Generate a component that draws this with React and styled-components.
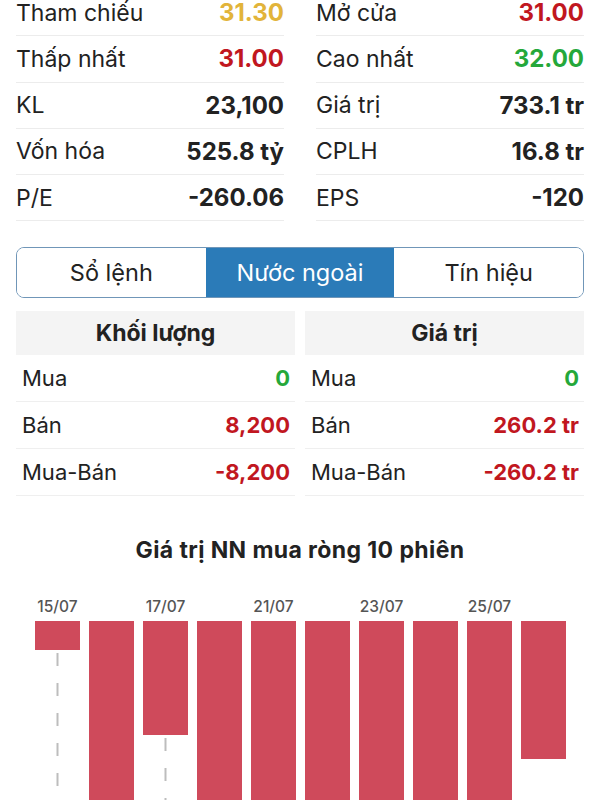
import React from 'react';
import styled, { createGlobalStyle } from 'styled-components';

const GlobalStyle = createGlobalStyle`
  html, body {
    margin: 0;
    padding: 0;
    background: #fff;
    overflow: hidden;
  }
  body {
    font-family: Inter, "Noto Sans", "Liberation Sans", sans-serif;
    color: #222;
  }
`;

const COLORS = {
  normal: '#222',
  ref: '#e2b43a',
  down: '#c1171f',
  up: '#25a83a',
};

const stats = [
  [
    { label: 'Tham chiếu', value: '31.30', tone: 'ref' },
    { label: 'Thấp nhất', value: '31.00', tone: 'down' },
    { label: 'KL', value: '23,100' },
    { label: 'Vốn hóa', value: '525.8 tỷ' },
    { label: 'P/E', value: '-260.06' },
  ],
  [
    { label: 'Mở cửa', value: '31.00', tone: 'down' },
    { label: 'Cao nhất', value: '32.00', tone: 'up' },
    { label: 'Giá trị', value: '733.1 tr' },
    { label: 'CPLH', value: '16.8 tr' },
    { label: 'EPS', value: '-120' },
  ],
];

const foreign = [
  {
    title: 'Khối lượng',
    rows: [
      { label: 'Mua', value: '0', tone: 'up' },
      { label: 'Bán', value: '8,200', tone: 'down' },
      { label: 'Mua-Bán', value: '-8,200', tone: 'down' },
    ],
  },
  {
    title: 'Giá trị',
    rows: [
      { label: 'Mua', value: '0', tone: 'up' },
      { label: 'Bán', value: '260.2 tr', tone: 'down' },
      { label: 'Mua-Bán', value: '-260.2 tr', tone: 'down' },
    ],
  },
];

const tabs = ['Sổ lệnh', 'Nước ngoài', 'Tín hiệu'];

// chiều cao cột (px), các cột khác vượt khỏi khung
const bars = [29, 240, 114, 240, 240, 240, 240, 240, 240, 138];
const dates = { 0: '15/07', 2: '17/07', 4: '21/07', 6: '23/07', 8: '25/07' };
const dashed = [0, 2];

const Page = styled.div`
  padding: 0 16px;
`;

const StatsGrid = styled.div`
  display: grid;
  grid-template-columns: 1fr 1fr;
  column-gap: 32px;
  margin-top: -10px;
`;

const StatCol = styled.div`
  display: flex;
  flex-direction: column;
`;

const StatRow = styled.div`
  display: flex;
  align-items: center;
  justify-content: space-between;
  height: 45.25px;
  border-bottom: 1px solid #ececec;
  font-size: 23px;
`;

const Label = styled.span`
  color: #222;
`;

const Value = styled.span`
  font-weight: 700;
  font-size: ${(p) => p.$size || 'inherit'};
  color: ${(p) => COLORS[p.$tone || 'normal']};
`;

const Segmented = styled.div`
  display: grid;
  grid-template-columns: repeat(3, 1fr);
  margin-top: 26px;
  height: 49px;
  border: 1px solid #7096b8;
  border-radius: 8px;
  overflow: hidden;
`;

const Tab = styled.div`
  display: flex;
  align-items: center;
  justify-content: center;
  font-size: 23.5px;
  color: ${(p) => (p.$active ? '#fff' : '#222')};
  background: ${(p) => (p.$active ? '#2b7bb8' : '#fff')};
`;

const ForeignGrid = styled.div`
  display: grid;
  grid-template-columns: 1fr 1fr;
  column-gap: 10px;
  margin-top: 13px;
`;

const ForeignCol = styled.div`
  display: flex;
  flex-direction: column;
`;

const ColHeader = styled.div`
  height: 44px;
  display: flex;
  align-items: center;
  justify-content: center;
  background: #f4f4f4;
  font-size: 23px;
  font-weight: 700;
`;

const ForeignRow = styled.div`
  display: flex;
  align-items: center;
  justify-content: space-between;
  height: 47px;
  box-sizing: border-box;
  padding: 0 5px 0 6px;
  border-bottom: 1px solid #efefef;
  font-size: 22px;
`;

const ChartTitle = styled.div`
  margin-top: 40px;
  text-align: center;
  font-size: 23px;
  letter-spacing: 0.4px;
  font-weight: 700;
  color: #222;
`;

const ChartSvg = styled.svg`
  display: block;
  margin: 26px -16px 0;
`;

const BarChart = () => (
  <ChartSvg width="600" height="220" viewBox="0 0 600 220">
    {bars.map((h, i) => {
      const x = 35 + i * 54;
      return (
        <g key={i}>
          {dates[i] && (
            <text
              x={x + 22.5}
              y="22"
              textAnchor="middle"
              fontSize="15.5"
              fontWeight="500"
              fill="#555"
              fontFamily="Inter, 'Noto Sans', sans-serif"
            >
              {dates[i]}
            </text>
          )}
          <rect x={x} y="31" width="45" height={h} fill="#cf4a5b" />
          {dashed.includes(i) && (
            <line
              x1={x + 22.5}
              x2={x + 22.5}
              y1={31 + h + 3}
              y2="220"
              stroke="#bdbdbd"
              strokeWidth="2"
              strokeDasharray="13 17"
            />
          )}
        </g>
      );
    })}
  </ChartSvg>
);

export default function App() {
  return (
    <>
      <GlobalStyle />
      <Page>
        <StatsGrid>
          {stats.map((col, ci) => (
            <StatCol key={ci}>
              {col.map((s) => (
                <StatRow key={s.label}>
                  <Label>{s.label}</Label>
                  <Value $tone={s.tone} $size="24px">{s.value}</Value>
                </StatRow>
              ))}
            </StatCol>
          ))}
        </StatsGrid>

        <Segmented>
          {tabs.map((t) => (
            <Tab key={t} $active={t === 'Nước ngoài'}>
              {t}
            </Tab>
          ))}
        </Segmented>

        <ForeignGrid>
          {foreign.map((f) => (
            <ForeignCol key={f.title}>
              <ColHeader>{f.title}</ColHeader>
              {f.rows.map((r) => (
                <ForeignRow key={r.label}>
                  <Label>{r.label}</Label>
                  <Value $tone={r.tone}>{r.value}</Value>
                </ForeignRow>
              ))}
            </ForeignCol>
          ))}
        </ForeignGrid>

        <ChartTitle>Giá trị NN mua ròng 10 phiên</ChartTitle>
        <BarChart />
      </Page>
    </>
  );
}
